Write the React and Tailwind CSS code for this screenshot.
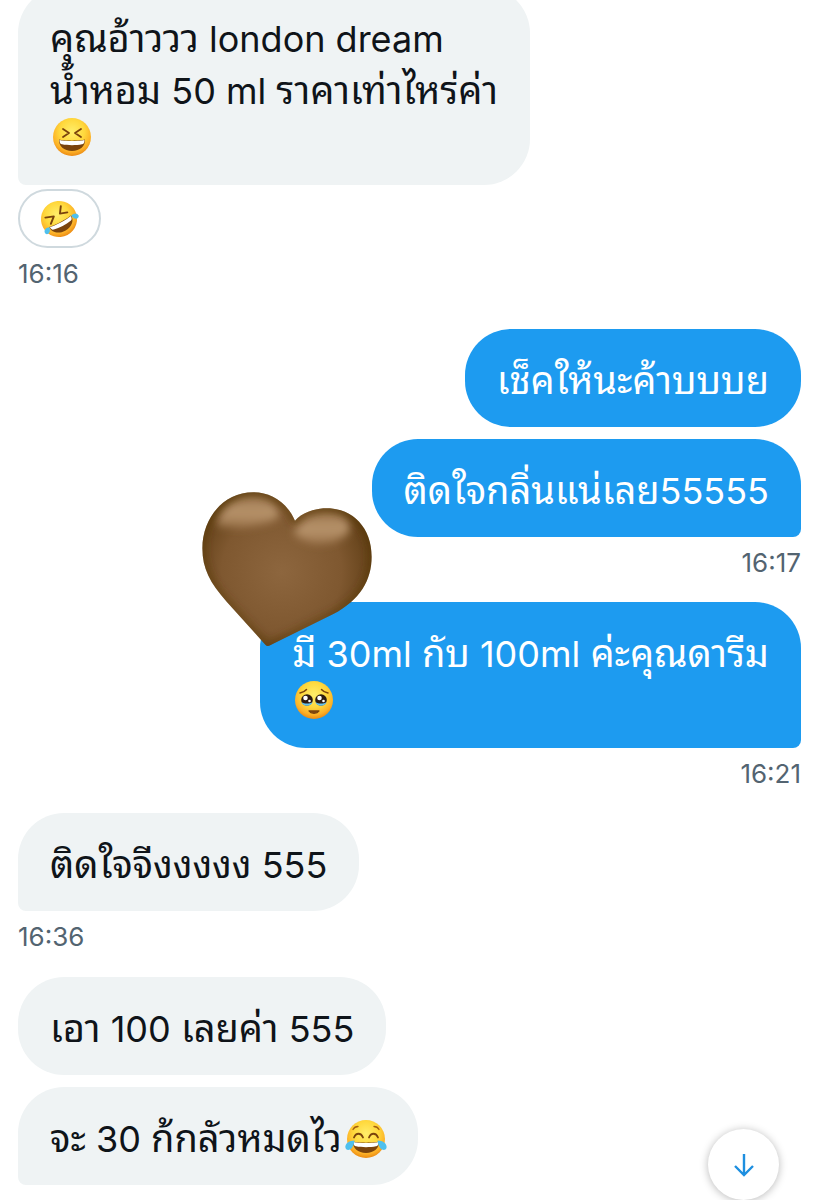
import React, { useId } from "react";

function Face({ id }) {
  return (
    <>
      <defs>
        <radialGradient id={id} cx="50%" cy="36%" r="66%">
          <stop offset="0" stopColor="#ffee6a" />
          <stop offset="0.5" stopColor="#ffd83c" />
          <stop offset="0.8" stopColor="#fcb027" />
          <stop offset="1" stopColor="#e8830f" />
        </radialGradient>
      </defs>
      <circle cx="20" cy="20" r="19" fill={`url(#${id})`} />
    </>
  );
}

function Grin() {
  return (
    <>
      <path d="M7 22.500C11 24 29 24 33 22.500C33.500 29 28 34 20 34C12 34 6.500 29 7 22.500Z" fill="#7a430c" />
      <path d="M7.500 23C12 24.300 28 24.300 32.500 23C32.500 26 31.500 27 30 27.300C24 28.500 16 28.500 10 27.300C8.500 27 7.500 26 7.500 23Z" fill="#fff" />
    </>
  );
}

function LaughingEmoji() {
  const id = useId();
  return (
    <svg viewBox="0 0 40 40" role="img" aria-label="😆" className="inline-block size-10">
      <Face id={id} />
      <path d="M11 12L17 16L11 20M29 12L23 16L29 20" fill="none" stroke="#7a430c" strokeWidth="1.800" strokeLinecap="round" strokeLinejoin="round" />
      <Grin />
    </svg>
  );
}

function RollingEmoji() {
  const id = useId();
  return (
    <svg viewBox="0 0 40 40" role="img" aria-label="🤣" className="mr-0.5 size-[38px] overflow-visible">
      <g transform="rotate(-28 20 20)">
        <Face id={id} />
        <path d="M8 12L16.500 15L10 20.500M28 9L23.500 15.500L31 18" fill="none" stroke="#7a430c" strokeWidth="2" strokeLinecap="round" strokeLinejoin="round" />
        <Grin />
        <path d="M7 23C3 21.500 0 23 0 26.500C1 30 6 29 7 23ZM33 23C37 21.500 40 23 40 26.500C39 30 34 29 33 23Z" fill="#4fc0ee" />
      </g>
    </svg>
  );
}

function TearyEmoji() {
  const id = useId();
  return (
    <svg viewBox="0 0 40 40" role="img" aria-label="🥹" className="inline-block size-10">
      <Face id={id} />
      <path d="M6 13C9 12.500 11 11.300 12.500 9.500M34 13C31 12.500 29 11.300 27.500 9.500" fill="none" stroke="#7a430c" strokeWidth="1.500" strokeLinecap="round" />
      <circle cx="13" cy="20" r="5.800" fill="#2c1a10" />
      <circle cx="27" cy="20" r="5.800" fill="#2c1a10" />
      <path d="M7.500 22C10 24 16 24 18.500 22C17.500 27 8.500 27 7.500 22ZM21.500 22C24 24 30 24 32.500 22C31.500 27 22.500 27 21.500 22Z" fill="#69c4ee" />
      <g fill="#fff">
        <circle cx="11.500" cy="18" r="2.300" />
        <circle cx="15.500" cy="21" r="1.300" />
        <circle cx="25.500" cy="18" r="2.300" />
        <circle cx="29.500" cy="21" r="1.300" />
      </g>
      <path d="M15 31C17 34 23 34 25 31Z" fill="#8a4a10" stroke="#7a430c" strokeWidth="1.300" strokeLinejoin="round" />
    </svg>
  );
}

function JoyEmoji() {
  const id = useId();
  return (
    <svg viewBox="0 0 40 40" role="img" aria-label="😂" className="inline-block size-10 overflow-visible">
      <Face id={id} />
      <path d="M7 10.500C8 8.500 10 7.500 12 7.500M33 10.500C32 8.500 30 7.500 28 7.500" fill="none" stroke="#a4600f" strokeWidth="1.300" strokeLinecap="round" />
      <path d="M8 18.500C10 13.500 15 13.500 17 18.500M23 18.500C25 13.500 30 13.500 32 18.500" fill="none" stroke="#7a430c" strokeWidth="1.800" strokeLinecap="round" />
      <Grin />
      <path d="M8.500 21.500C3 21.500 -1.500 25 -0.500 29C1 33 7.500 31 8.500 21.500ZM31.500 21.500C37 21.500 41.500 25 40.500 29C39 33 32.500 31 31.500 21.500Z" fill="#4fc0ee" />
    </svg>
  );
}

function BrownHeart() {
  const path =
    "M315 122C290 65 240 37 190 37C100 37 37 115 37 205C37 265 60 310 110 365L226 494Q232 502 242 495L430 402C510 360 545 300 545 230C545 145 490 85 410 85C370 85 335 100 315 122Z";
  return (
    <svg viewBox="36 36 510 466" role="img" aria-label="🤎" className="absolute -top-[110px] -left-[58px] w-[170px]">
      <defs>
        <radialGradient id="heart-fill" gradientUnits="userSpaceOnUse" cx="275" cy="275" r="300">
          <stop offset="0" stopColor="#8d663e" />
          <stop offset="0.6" stopColor="#7f5830" />
          <stop offset="0.85" stopColor="#68451c" />
          <stop offset="1" stopColor="#573811" />
        </radialGradient>
        <linearGradient id="heart-shine" x1="0" y1="0" x2="0" y2="1">
          <stop offset="0" stopColor="#9c774d" />
          <stop offset="0.55" stopColor="#b8946c" />
          <stop offset="1" stopColor="#b08a61" stopOpacity="0.6" />
        </linearGradient>
        <filter id="heart-soft" x="-30%" y="-30%" width="160%" height="160%">
          <feGaussianBlur stdDeviation="12" />
        </filter>
        <clipPath id="heart-clip">
          <path d={path} />
        </clipPath>
      </defs>
      <path d={path} fill="url(#heart-fill)" />
      <g clipPath="url(#heart-clip)">
        <g fill="url(#heart-shine)" filter="url(#heart-soft)">
          <path d="M78 136C90 72 145 44 195 46C245 50 270 84 266 112C240 136 140 152 78 136Z" />
          <path d="M312 158C332 110 380 92 425 96C472 104 486 128 474 160C450 186 405 198 362 188C342 182 320 172 312 158Z" />
        </g>
        <path d={path} fill="none" stroke="#56370f" strokeWidth="12" strokeOpacity="0.85" filter="url(#heart-soft)" />
      </g>
    </svg>
  );
}

function Thai({ children }) {
  return <span lang="th" className="text-[38px] leading-none">{children}</span>;
}

function Bubble({ mine = false, tail = false, children }) {
  const side = mine
    ? "self-end bg-[#1d9bf0] text-white"
    : "self-start bg-[#eff3f4] text-[#0f1419]";
  const corner = tail ? (mine ? "rounded-br-lg" : "rounded-bl-lg") : "";
  return (
    <div className={`relative max-w-full rounded-[46px] px-8 pt-[26px] pb-5 text-[36px] leading-[52px] ${side} ${corner}`}>
      {children}
    </div>
  );
}

function Time({ mine = false, children }) {
  return (
    <time className={`mt-2.5 text-[26px] leading-8 text-[#536471] ${mine ? "self-end" : "self-start"}`}>
      {children}
    </time>
  );
}

export default function App() {
  return (
    <main className="min-h-screen overflow-hidden bg-white px-[18px] pb-3.5 font-['Inter','Noto_Sans_Thai_Looped','Noto_Looped_Thai','Loma','Garuda','Waree','Umpush','Laksaman','Sarabun','Tlwg_Typo','Kinnari','Norasi',sans-serif]">
      <section className="-mt-[13px] flex flex-col">
        <Bubble tail>
          <p><Thai>คุณอ้าววว</Thai> london dream</p>
          <p><Thai>น้ำหอม</Thai> 50 ml <Thai>ราคาเท่าไหร่ค่า</Thai></p>
          <p className="mb-2 flex h-10 items-center px-0.5">
            <LaughingEmoji />
          </p>
        </Bubble>
        <button type="button" className="mt-1 flex h-[59px] w-[83px] items-center justify-center self-start rounded-full border-2 border-[#cfd9de] bg-white">
          <RollingEmoji />
        </button>
        <Time>16:16</Time>
      </section>

      <section className="mt-[39px] flex flex-col">
        <Bubble mine><Thai>เช็คให้นะค้าบบบย</Thai></Bubble>
        <div className="mt-3 flex flex-col">
          <Bubble mine tail><Thai>ติดใจกลิ่นแน่เลย</Thai>55555</Bubble>
        </div>
        <Time mine>16:17</Time>
      </section>

      <section className="mt-[23px] flex flex-col">
        <Bubble mine tail>
          <p><Thai>มี</Thai> 30ml <Thai>กับ</Thai> 100ml <Thai>ค่ะคุณดารีม</Thai></p>
          <p className="mb-2 flex h-10 items-center px-0.5">
            <TearyEmoji />
          </p>
          <BrownHeart />
        </Bubble>
        <Time mine>16:21</Time>
      </section>

      <section className="mt-[23px] flex flex-col">
        <Bubble tail><Thai>ติดใจจีงงงงง</Thai> 555</Bubble>
        <Time>16:36</Time>
      </section>

      <section className="mt-6 flex flex-col gap-3">
        <Bubble><Thai>เอา</Thai> 100 <Thai>เลยค่า</Thai> 555</Bubble>
        <Bubble tail>
          <div className="flex items-center gap-1">
            <p><Thai>จะ</Thai> 30 <Thai>ก้กลัวหมดไว</Thai></p>
            <JoyEmoji />
          </div>
        </Bubble>
      </section>

      <button type="button" aria-label="Scroll to latest" className="fixed right-10 bottom-0 flex size-[71px] items-center justify-center rounded-full bg-white shadow-[0_1px_8px_rgba(0,0,0,0.28)]">
        <svg viewBox="0 0 24 24" fill="none" stroke="#1d8fe0" strokeWidth="2.400" className="size-6">
          <path d="M12 1V22M3 13L12 22L21 13" />
        </svg>
      </button>
    </main>
  );
}
